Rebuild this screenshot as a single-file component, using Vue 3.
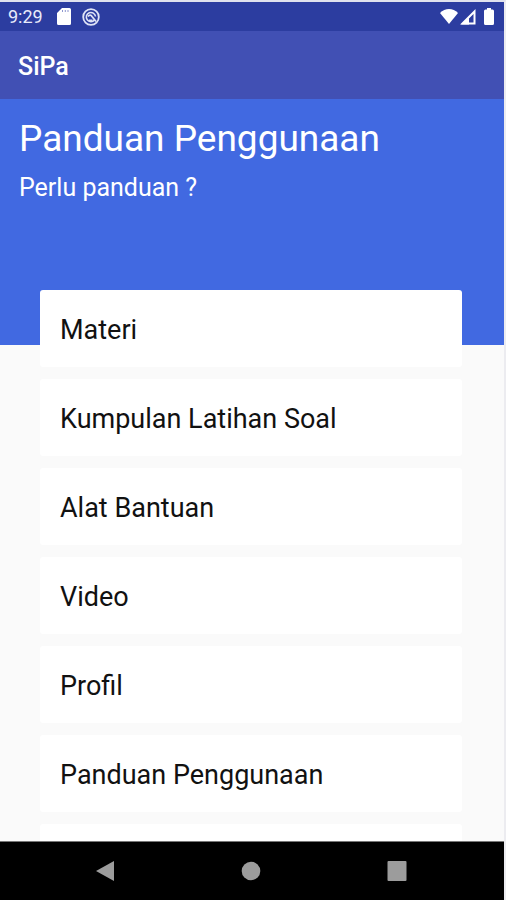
<script setup>
const guides = [
  'Materi',
  'Kumpulan Latihan Soal',
  'Alat Bantuan',
  'Video',
  'Profil',
  'Panduan Penggunaan',
]
</script>

<template>
  <div class="screen">
    <div class="status">
      <span class="clock">9:29</span>
      <svg class="sd" width="14" height="17" viewBox="0 0 14 17" aria-hidden="true">
        <path d="M5 0h7.500a1.500 1.500 0 0 1 1.500 1.500v14a1.500 1.500 0 0 1-1.500 1.500h-11A1.500 1.500 0 0 1 0 15.500V5z" fill="#fff" />
        <path d="M5.500 2v2M8.300 2v2M11 2v2" stroke="#8d96cf" stroke-width="1" />
      </svg>
      <svg class="sync" width="18" height="18" viewBox="0 0 18 18" fill="none" stroke="#dfe3f6" aria-hidden="true">
        <circle cx="9" cy="9" r="7.800" stroke-width="1.800" />
        <path d="M12.500 12A4.600 4.600 0 1 1 13.500 8.500" stroke-width="1.600" />
        <path d="M6 8.500C7.500 6.500 9 7 10 8.500L14 13.500M7 12.500h3.500" stroke-width="1.800" />
      </svg>
      <span class="spacer"></span>
      <svg class="wifi" width="18" height="15" viewBox="0 0 18 15" aria-hidden="true">
        <path d="M0 4C5-1.300 13-1.300 18 4L9 15z" fill="#fff" />
      </svg>
      <svg class="signal" width="16" height="16" viewBox="0 0 16 16" aria-hidden="true">
        <path d="M2.500 14.500L14.500 2.500v12z" fill="none" stroke="#fff" stroke-width="2" />
        <path d="M1 15.500L9 7.500v8z" fill="#fff" />
      </svg>
      <svg class="battery" width="10" height="17" viewBox="0 0 10 17" aria-hidden="true">
        <path d="M3 0h4v1.500h1.500a1.500 1.500 0 0 1 1.500 1.500v12.500a1.500 1.500 0 0 1-1.500 1.500h-7a1.500 1.500 0 0 1-1.500-1.500V3a1.500 1.500 0 0 1 1.500-1.500H3z" fill="#fff" />
      </svg>
    </div>

    <header class="appbar">SiPa</header>

    <main class="content">
      <section class="hero">
        <h1>Panduan Penggunaan</h1>
        <p>Perlu panduan ?</p>
      </section>
      <div class="list">
        <button v-for="guide in guides" :key="guide" class="card" type="button">{{ guide }}</button>
        <div class="card"></div>
      </div>
    </main>

    <nav class="navbar">
      <button type="button" aria-label="Kembali">
        <svg width="20" height="22" viewBox="0 0 20 22"><path d="M1 11L19 1v20z" fill="#9c9c9c" /></svg>
      </button>
      <button type="button" aria-label="Beranda">
        <svg width="20" height="20" viewBox="0 0 20 20"><circle cx="10" cy="10" r="9.300" fill="#9c9c9c" /></svg>
      </button>
      <button type="button" aria-label="Terbaru">
        <svg width="20" height="20" viewBox="0 0 20 20"><rect x="0.500" width="19" height="20" rx="1" fill="#9c9c9c" /></svg>
      </button>
    </nav>
  </div>
</template>

<style>
body {
  margin: 0;
}
</style>

<style scoped>
.screen {
  box-sizing: border-box;
  height: 100vh;
  display: flex;
  flex-direction: column;
  border-top: 2px solid #e0e2ee;
  border-right: 2px solid #ececf0;
  background: #fafafa;
  font-family: Roboto, "Liberation Sans", sans-serif;
  overflow: hidden;
}

.status {
  flex: none;
  display: flex;
  align-items: center;
  height: 29px;
  padding: 0 10px 0 8px;
  background: #2c3da0;
  color: #e8ebfa;
}

.clock {
  font-size: 18px;
  line-height: 28px;
}

.sd {
  margin-left: 14px;
}

.sync {
  margin-left: 11px;
}

.spacer {
  flex: 1;
}

.signal {
  margin-left: 2px;
}

.battery {
  margin-left: 8px;
}

.appbar {
  flex: none;
  height: 68px;
  padding: 0 18px;
  background: #4150b4;
  color: #fff;
  font-size: 25px;
  font-weight: 500;
  line-height: 72px;
}

.content {
  flex: 1;
  min-height: 0;
  overflow: hidden;
}

.hero {
  box-sizing: border-box;
  height: 246px;
  padding: 17px 19px;
  background: #4169e1;
  color: #fff;
}

h1 {
  margin: 0;
  font-size: 37px;
  font-weight: 400;
  line-height: 46px;
}

p {
  margin: 10px 0 0;
  font-size: 25px;
  line-height: 32px;
}

.list {
  display: flex;
  flex-direction: column;
  gap: 12px;
  margin: -55px 42px 0 40px;
}

.card {
  box-sizing: border-box;
  height: 77px;
  flex: none;
  padding: 3px 20px 0;
  border: 0;
  border-radius: 3px;
  background: #fff;
  color: #111;
  font-family: inherit;
  font-size: 27px;
  line-height: 36px;
  text-align: left;
}

.navbar {
  flex: none;
  display: flex;
  justify-content: space-between;
  align-items: center;
  height: 58px;
  padding: 0 82px 0 80px;
  border-top: 1px solid #777;
  background: #000;
}

.navbar button {
  display: flex;
  align-items: center;
  justify-content: center;
  width: 50px;
  height: 50px;
  padding: 0;
  border: 0;
  background: none;
}
</style>
